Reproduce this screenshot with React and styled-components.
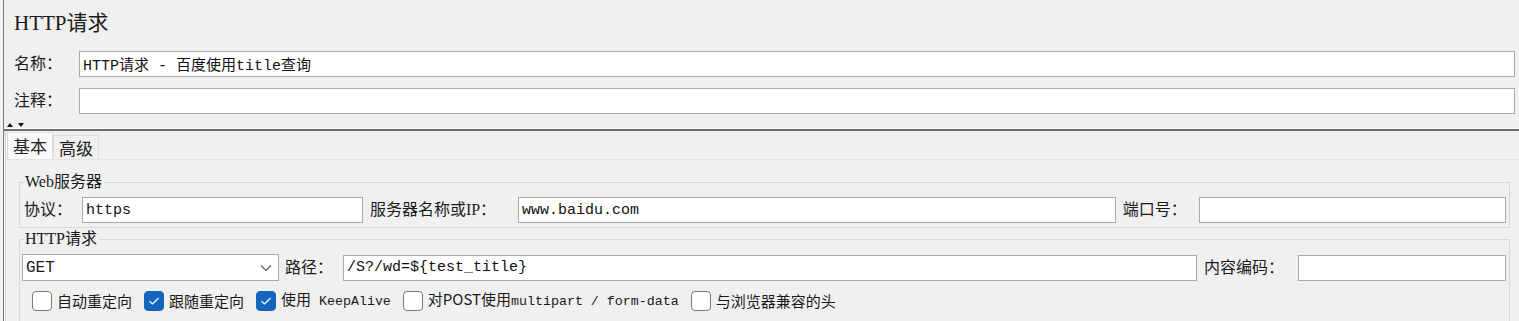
import React from 'react'
import styled, { createGlobalStyle } from 'styled-components'

const GlobalStyle = createGlobalStyle`
  html, body {
    margin: 0;
    padding: 0;
    background: #f0f0f0;
    overflow: hidden;
  }
  * {
    box-sizing: border-box;
  }
`

const SERIF = `"Liberation Serif", "Noto Sans CJK SC", serif`
const MONO = `"Liberation Mono", "Noto Sans CJK SC", monospace`
const SANS = `"Noto Sans CJK SC", "Liberation Sans", sans-serif`

const Frame = styled.div`
  margin-left: 3px;
  border-left: 1px solid #7c7c7c;
  min-height: 321px;
  background: #f0f0f0;
  color: #1a1a1a;
`

const TopSection = styled.div`
  display: flex;
  flex-direction: column;
  padding: 9px 4px 0 10px;
`

const Title = styled.div`
  font-family: ${SERIF};
  font-size: 21px;
  line-height: 28px;
  height: 28px;
  margin-bottom: 14px;
`

const Rows = styled.div`
  display: flex;
  flex-direction: column;
  gap: 11px;
`

const Row = styled.div`
  display: flex;
  align-items: center;
`

const Label = styled.span`
  font-family: ${SERIF};
  font-size: 16px;
  line-height: 20px;
  white-space: nowrap;
  flex: 0 0 ${p => p.$w}px;
  padding-left: ${p => p.$pad || 0}px;
`

const TextInput = styled.input`
  flex: ${p => p.$grow || 1} 1 0;
  min-width: 0;
  height: ${p => p.$h || 26}px;
  border: 1px solid #a9a9ae;
  background: #fff;
  padding: 0 3px;
  font-family: ${MONO};
  font-size: 15px;
  color: #111;
  outline: none;
`

const Divider = styled.div`
  display: flex;
  align-items: flex-end;
  gap: 5px;
  height: 9px;
  margin-top: 8px;
  padding: 0 0 1px 3px;
  border-bottom: 2px solid #6e6e6e;
  box-shadow: inset 0 -1px 0 #ffffff;
`

const Arrow = styled.span`
  width: 0;
  height: 0;
  margin-bottom: 1px;
  border-left: 3px solid transparent;
  border-right: 3px solid transparent;
  border-bottom: ${p => (p.$up ? '4px solid #111' : 'none')};
  border-top: ${p => (p.$up ? 'none' : '4px solid #111')};
`

const Lower = styled.div`
  margin-left: 1px;
  border-left: 1px solid #d4d4d4;
`

const TabBar = styled.div`
  display: flex;
  align-items: flex-end;
  padding: 1px 0 0 1px;
  border-bottom: 1px solid #e4e4e4;
`

const Tab = styled.div`
  font-family: ${SANS};
  font-size: 17px;
  line-height: 22px;
  padding: 0 5px;
  height: ${p => (p.$active ? 27 : 24)}px;
  display: flex;
  align-items: center;
  border: 1px solid #dedede;
  border-bottom: none;
  background: ${p => (p.$active ? '#f9f9f9' : '#f0f0f0')};
  color: #222;
`

const Panel = styled.div`
  display: flex;
  flex-direction: column;
  gap: 2px;
  padding: 13px 9px 0 13px;
`

const Group = styled.fieldset`
  margin: 0;
  padding: ${p => (p.$open ? '6px 3px 20px 4px' : '6px 3px 4px 4px')};
  border: 1px solid #d8d8d8;
  min-width: 0;
`

const Legend = styled.legend`
  font-family: ${SERIF};
  font-size: 16px;
  line-height: 18px;
  padding: 0 2px 0 1px;
  margin-left: 0;
  color: #1a1a1a;
`

const Select = styled.div`
  flex: 0 0 257px;
  margin-left: -2px;
  height: 27px;
  border: 1px solid #a9a9ae;
  background: #fff;
  display: flex;
  align-items: center;
  justify-content: space-between;
  padding: 0 6px 0 3px;
  font-family: ${MONO};
  font-size: 16px;
`

const Checks = styled.div`
  display: flex;
  align-items: center;
  gap: 12px;
  padding: 8px 0 0 8px;
`

const CheckItem = styled.label`
  display: flex;
  align-items: center;
  gap: 5px;
  font-family: ${SANS};
  font-size: 15px;
  line-height: 20px;
  white-space: nowrap;
  color: #1a1a1a;
`

const Box = styled.span`
  width: 20px;
  height: 20px;
  border-radius: 4px;
  display: flex;
  align-items: center;
  justify-content: center;
  border: 1px solid ${p => (p.$on ? '#1464c0' : '#7a7a7a')};
  background: ${p => (p.$on ? '#1464c0' : '#fff')};
`

const Mono = styled.span`
  font-family: "Liberation Mono", monospace;
  font-size: 13.3px;
`

const Chevron = () => (
  <svg width="12" height="8" viewBox="0 0 12 8">
    <path d="M1 1.5 L6 6.5 L11 1.5" fill="none" stroke="#555" strokeWidth="1.1" />
  </svg>
)

const Tick = () => (
  <svg width="12" height="10" viewBox="0 0 12 10">
    <path d="M1.5 5.2 L4.6 8 L10.5 2" fill="none" stroke="#fff" strokeWidth="1.2" />
  </svg>
)

const options = [
  { label: <>自动重定向</>, on: false },
  { label: <>跟随重定向</>, on: true },
  { label: <>使用<Mono> KeepAlive</Mono></>, on: true },
  { label: <>对POST使用<Mono>multipart / form-data</Mono></>, on: false },
  { label: <>与浏览器兼容的头</>, on: false },
]

export default function App() {
  return (
    <>
      <GlobalStyle />
      <Frame>
        <TopSection>
          <Title>HTTP请求</Title>
          <Rows>
            <Row>
              <Label $w={65}>名称：</Label>
              <TextInput readOnly value="HTTP请求 - 百度使用title查询" />
            </Row>
            <Row>
              <Label $w={65}>注释：</Label>
              <TextInput readOnly value="" />
            </Row>
          </Rows>
        </TopSection>
        <Divider>
          <Arrow $up />
          <Arrow />
        </Divider>
        <Lower>
          <TabBar>
            <Tab $active>基本</Tab>
            <Tab>高级</Tab>
          </TabBar>
          <Panel>
            <Group>
              <Legend>Web服务器</Legend>
              <Row>
                <Label $w={58}>协议：</Label>
                <TextInput $grow={279} readOnly value="https" />
                <Label $w={155} $pad={7}>服务器名称或IP：</Label>
                <TextInput $grow={603} readOnly value="www.baidu.com" />
                <Label $w={83} $pad={7}>端口号：</Label>
                <TextInput $grow={306} readOnly value="" />
              </Row>
            </Group>
            <Group $open>
              <Legend>HTTP请求</Legend>
              <Row>
                <Select>
                  <span>GET</span>
                  <Chevron />
                </Select>
                <Label $w={64} $pad={6}>路径：</Label>
                <TextInput $grow={859} readOnly value="/S?/wd=${test_title}" />
                <Label $w={101} $pad={7}>内容编码：</Label>
                <TextInput $grow={203} readOnly value="" />
              </Row>
              <Checks>
                {options.map((o, i) => (
                  <CheckItem key={i}>
                    <Box $on={o.on}>{o.on && <Tick />}</Box>
                    <span>{o.label}</span>
                  </CheckItem>
                ))}
              </Checks>
            </Group>
          </Panel>
        </Lower>
      </Frame>
    </>
  )
}
